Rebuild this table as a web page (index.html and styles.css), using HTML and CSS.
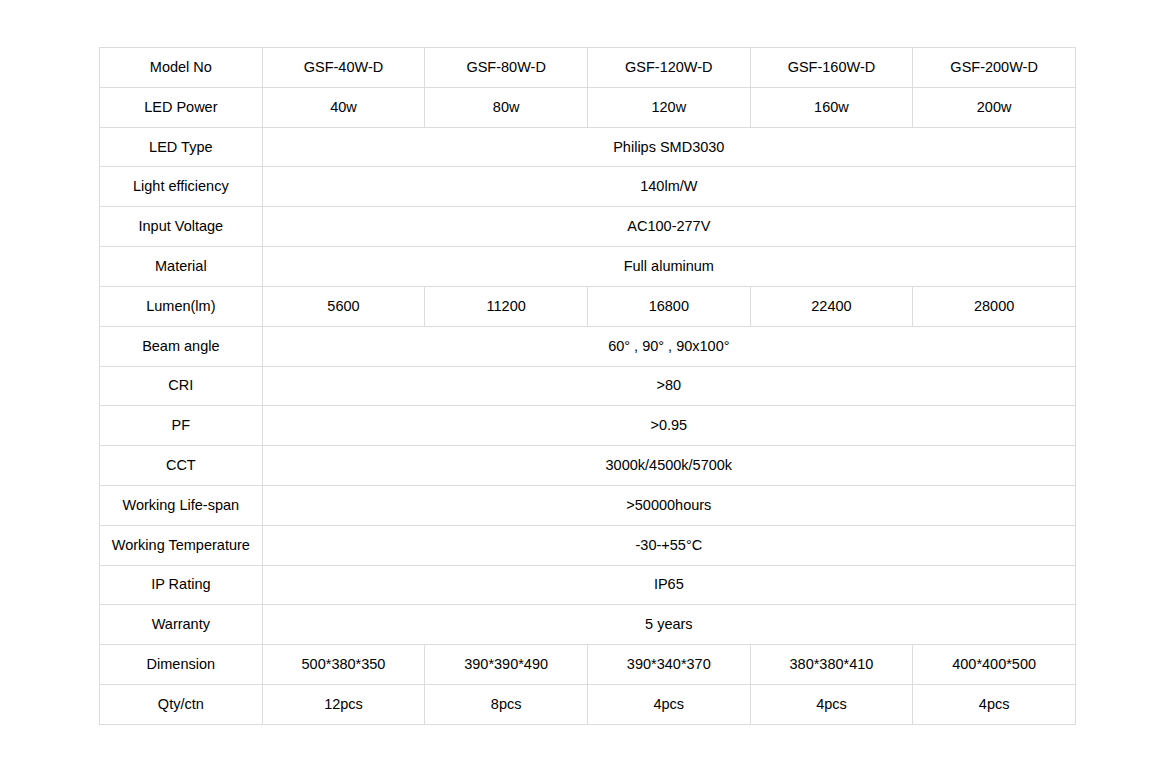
FILE: index.html
```html
<!DOCTYPE html>
<html>
<head>
<meta charset="utf-8">
<link rel="stylesheet" href="styles.css">
</head>
<body>
<table class="spec">
<colgroup><col><col><col><col><col><col></colgroup>
<tbody>
<tr><td>Model No</td><td>GSF-40W-D</td><td>GSF-80W-D</td><td>GSF-120W-D</td><td>GSF-160W-D</td><td>GSF-200W-D</td></tr>
<tr><td>LED Power</td><td>40w</td><td>80w</td><td>120w</td><td>160w</td><td>200w</td></tr>
<tr><td>LED Type</td><td colspan="5">Philips SMD3030</td></tr>
<tr><td>Light efficiency</td><td colspan="5">140lm/W</td></tr>
<tr><td>Input Voltage</td><td colspan="5">AC100-277V</td></tr>
<tr><td>Material</td><td colspan="5">Full aluminum</td></tr>
<tr><td>Lumen(lm)</td><td>5600</td><td>11200</td><td>16800</td><td>22400</td><td>28000</td></tr>
<tr><td>Beam angle</td><td colspan="5">60° , 90° , 90x100°</td></tr>
<tr><td>CRI</td><td colspan="5">&gt;80</td></tr>
<tr><td>PF</td><td colspan="5">&gt;0.95</td></tr>
<tr><td>CCT</td><td colspan="5">3000k/4500k/5700k</td></tr>
<tr><td>Working Life-span</td><td colspan="5">&gt;50000hours</td></tr>
<tr><td>Working Temperature</td><td colspan="5">-30-+55°C</td></tr>
<tr><td>IP Rating</td><td colspan="5">IP65</td></tr>
<tr><td>Warranty</td><td colspan="5">5 years</td></tr>
<tr><td>Dimension</td><td>500*380*350</td><td>390*390*490</td><td>390*340*370</td><td>380*380*410</td><td>400*400*500</td></tr>
<tr><td>Qty/ctn</td><td>12pcs</td><td>8pcs</td><td>4pcs</td><td>4pcs</td><td>4pcs</td></tr>
</tbody>
</table>
</body>
</html>
```
FILE: styles.css
```css
html, body {
  margin: 0;
  padding: 0;
  background: #fff;
}
body {
  padding: 47px 0 0 99px;
  font-family: "Liberation Sans", Arial, sans-serif;
  font-size: 14.5px;
  color: #000;
}
.spec {
  border-collapse: collapse;
  table-layout: fixed;
  width: 977px;
  height: 678px;
}
.spec col {
  width: 16.666%;
}
.spec td {
  border: 1px solid #dcdcdc;
  text-align: center;
  vertical-align: middle;
  padding: 0 0 1px 0;
  line-height: 16px;
}
```
